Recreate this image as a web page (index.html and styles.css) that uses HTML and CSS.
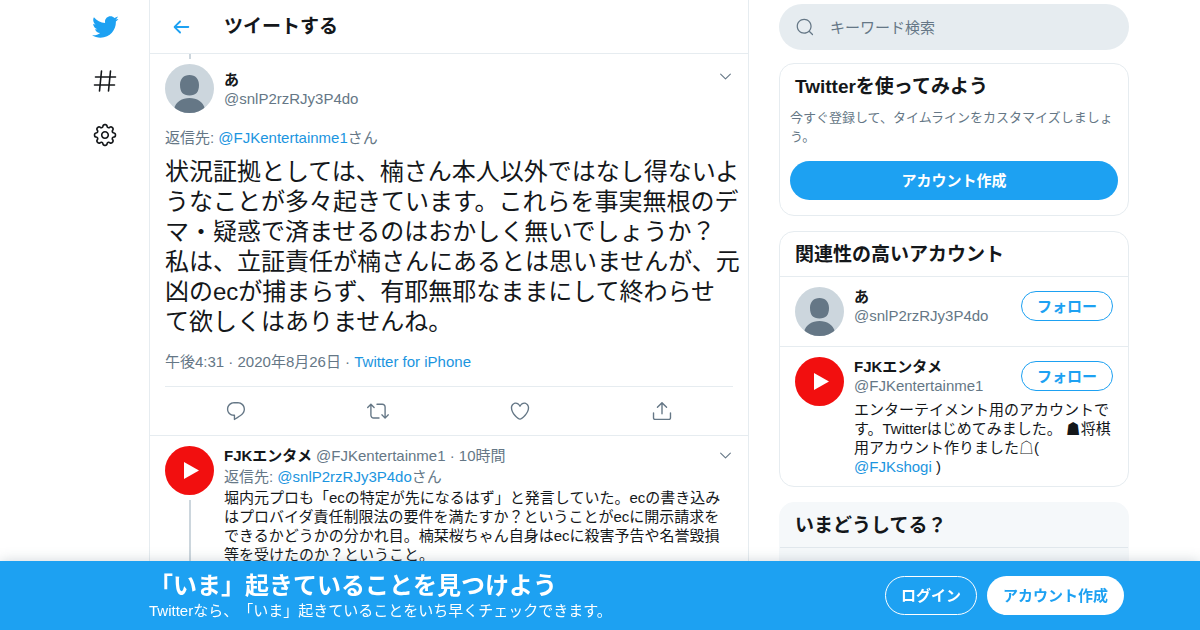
FILE: index.html
```html
<!DOCTYPE html>
<html lang="ja">
<head>
  <meta charset="UTF-8">
  <meta name="viewport" content="width=device-width, initial-scale=1.0">
  <title>ツイートする</title>
  <link rel="stylesheet" href="styles.css">
</head>
<body>
  <!-- shared icons -->
  <svg class="sprite" aria-hidden="true">
    <symbol id="chevron" viewBox="0 0 24 24">
      <path d="M3 7.5l9 9 9-9" fill="none" stroke="currentColor" stroke-width="2" stroke-linecap="round" stroke-linejoin="round"/>
    </symbol>
    <symbol id="person" viewBox="0 0 49 49">
      <rect width="49" height="49" fill="#ccd6dd"/>
      <path d="M24.500 11c6 0 9.500 4 9.500 10 0 7-3 10.500-9.500 10.500S15 28 15 21c0-6 3.500-10 9.500-10zM9 45c2-7.500 8-11 15.500-11S38 37.500 40 45v4H9z" fill="#657786"/>
    </symbol>
    <symbol id="play" viewBox="0 0 49 49">
      <rect width="49" height="49" fill="#f20f0f"/>
      <path d="M19 16v17l15-8.500z" fill="#fff"/>
    </symbol>
  </svg>

  <div class="page">
    <nav class="nav">
      <a href="#" class="nav-link" aria-label="Twitter">
        <svg class="bird" viewBox="0 0 24 24"><path d="M23.643 4.937c-.835.37-1.732.62-2.675.733.962-.576 1.7-1.49 2.048-2.578-.9.534-1.897.922-2.958 1.13-.85-.904-2.06-1.47-3.4-1.47-2.572 0-4.658 2.086-4.658 4.66 0 .364.042.718.12 1.06-3.873-.195-7.304-2.05-9.602-4.868-.4.69-.63 1.49-.63 2.342 0 1.616.823 3.043 2.072 3.878-.764-.025-1.482-.234-2.11-.583v.06c0 2.257 1.605 4.14 3.737 4.568-.392.106-.803.162-1.227.162-.3 0-.593-.028-.877-.082.593 1.85 2.313 3.198 4.352 3.234-1.595 1.25-3.604 1.995-5.786 1.995-.376 0-.747-.022-1.112-.065 2.062 1.323 4.51 2.093 7.14 2.093 8.57 0 13.255-7.098 13.255-13.254 0-.2-.005-.402-.014-.602.91-.658 1.7-1.477 2.323-2.41z"/></svg>
      </a>
      <a href="#" class="nav-link" aria-label="話題を検索">
        <svg viewBox="0 0 26 26"><path d="M9.500 3L7.500 23M18.500 3l-2 20M3.500 9h20M2.500 17h20" fill="none" stroke="currentColor" stroke-width="1.600" stroke-linecap="round"/></svg>
      </a>
      <a href="#" class="nav-link" aria-label="設定">
        <svg viewBox="0 0 24 24"><path d="M12 8.21c-2.09 0-3.79 1.7-3.79 3.79s1.7 3.79 3.79 3.79 3.79-1.7 3.79-3.79-1.7-3.79-3.79-3.79zm0 6.08c-1.262 0-2.29-1.026-2.29-2.29S10.74 9.71 12 9.71s2.29 1.026 2.29 2.29-1.028 2.29-2.29 2.29z"/><path d="M12.36 22.375h-.722c-1.183 0-2.154-.888-2.262-2.064l-.014-.147c-.025-.287-.207-.533-.472-.644-.286-.12-.582-.065-.798.115l-.116.097c-.868.725-2.253.663-3.06-.14l-.51-.51c-.836-.84-.896-2.154-.14-3.06l.098-.118c.186-.222.23-.523.122-.787-.11-.272-.358-.454-.646-.48l-.15-.014c-1.18-.107-2.067-1.08-2.067-2.262v-.722c0-1.183.888-2.154 2.064-2.262l.156-.014c.285-.025.53-.207.642-.473.11-.27.065-.573-.12-.795l-.094-.116c-.757-.908-.698-2.223.137-3.06l.512-.512c.804-.804 2.188-.865 3.06-.14l.116.098c.218.184.528.23.79.122.27-.112.452-.358.477-.643l.014-.153c.107-1.18 1.08-2.066 2.262-2.066h.722c1.183 0 2.154.888 2.262 2.064l.014.156c.025.285.206.53.472.64.277.117.58.062.794-.117l.12-.102c.867-.723 2.254-.662 3.06.14l.51.512c.836.838.896 2.153.14 3.06l-.1.118c-.188.22-.234.522-.123.788.112.27.36.45.646.478l.152.014c1.18.107 2.067 1.08 2.067 2.262v.723c0 1.183-.888 2.154-2.064 2.262l-.155.014c-.284.024-.53.205-.64.47-.113.272-.067.574.117.795l.1.12c.756.905.696 2.22-.14 3.06l-.51.51c-.807.804-2.19.864-3.06.14l-.115-.096c-.217-.183-.53-.23-.79-.122-.273.114-.455.36-.48.646l-.014.15c-.107 1.173-1.08 2.06-2.262 2.06zm-3.773-4.42c.3 0 .593.06.87.175.79.328 1.324 1.054 1.4 1.896l.014.147c.037.4.367.7.77.7h.722c.4 0 .73-.3.768-.7l.014-.148c.076-.842.61-1.567 1.392-1.892.793-.33 1.696-.182 2.333.35l.113.094c.178.148.366.18.493.18.206 0 .4-.08.546-.227l.51-.51c.284-.284.305-.73.048-1.038l-.1-.12c-.542-.65-.677-1.54-.352-2.323.326-.79 1.052-1.32 1.894-1.397l.155-.014c.397-.037.7-.367.7-.77v-.722c0-.4-.303-.73-.702-.768l-.152-.014c-.846-.078-1.57-.61-1.895-1.393-.326-.788-.19-1.678.353-2.327l.1-.118c.257-.31.236-.756-.048-1.04l-.51-.51c-.146-.147-.34-.227-.546-.227-.127 0-.315.032-.492.18l-.12.1c-.634.528-1.55.67-2.322.354-.788-.327-1.32-1.052-1.397-1.896l-.014-.155c-.035-.397-.365-.7-.767-.7h-.723c-.4 0-.73.303-.768.702l-.014.152c-.076.843-.608 1.568-1.39 1.893-.787.326-1.693.183-2.33-.35l-.118-.096c-.18-.15-.368-.18-.495-.18-.206 0-.4.08-.546.226l-.512.51c-.282.284-.303.73-.046 1.038l.1.118c.54.653.677 1.544.352 2.325-.327.788-1.052 1.32-1.895 1.397l-.156.014c-.397.037-.7.367-.7.77v.722c0 .4.303.73.702.768l.15.014c.848.078 1.573.612 1.897 1.396.325.786.19 1.675-.353 2.325l-.096.115c-.26.31-.238.756.046 1.04l.51.51c.146.147.34.227.546.227.127 0 .315-.03.492-.18l.116-.096c.406-.336.923-.524 1.453-.524z"/></svg>
      </a>
    </nav>

    <main class="main">
      <header class="main-header">
        <button class="back" aria-label="戻る">
          <svg viewBox="0 0 24 24"><path d="M20 11H7.414l4.293-4.293c.39-.39.39-1.023 0-1.414s-1.023-.39-1.414 0l-6 6c-.39.39-.39 1.023 0 1.414l6 6c.195.195.45.293.707.293s.512-.098.707-.293c.39-.39.39-1.023 0-1.414L7.414 13H20c.553 0 1-.447 1-1s-.447-1-1-1z"/></svg>
        </button>
        <h1 class="title">ツイートする</h1>
      </header>

      <article class="tweet">
        <div class="thread-top"></div>
        <div class="author">
          <svg class="avatar"><use href="#person"/></svg>
          <div class="author-text">
            <p class="name">あ</p>
            <p class="gray">@snlP2rzRJy3P4do</p>
          </div>
          <button class="more" aria-label="もっと見る"><svg><use href="#chevron"/></svg></button>
        </div>
        <p class="reply-to gray">返信先: <a href="#">@FJKentertainme1</a>さん</p>
        <p class="tweet-text">状況証拠としては、楠さん本人以外ではなし得ないようなことが多々起きています。これらを事実無根のデマ・疑惑で済ませるのはおかしく無いでしょうか？<br>私は、立証責任が楠さんにあるとは思いませんが、元凶のecが捕まらず、有耶無耶なままにして終わらせ<br>て欲しくはありませんね。</p>
        <p class="meta gray">午後4:31 · 2020年8月26日 · <a href="#">Twitter for iPhone</a></p>
        <div class="actions">
          <button aria-label="返信"><svg viewBox="0 0 24 24"><path d="M14.046 2.242l-4.148-.01h-.002c-4.374 0-7.8 3.427-7.8 7.802 0 4.098 3.186 7.206 7.465 7.37v3.828c0 .108.044.286.12.403.142.225.384.347.632.347.138 0 .277-.038.402-.118.264-.168 6.473-4.14 8.088-5.506 1.902-1.61 3.04-3.97 3.043-6.312v-.017c-.006-4.367-3.43-7.787-7.8-7.788zm3.787 12.972c-1.134.96-4.862 3.405-6.772 4.643V16.67c0-.414-.335-.75-.75-.75h-.396c-3.66 0-6.318-2.476-6.318-5.886 0-3.534 2.768-6.302 6.3-6.302l4.147.01h.002c3.532 0 6.3 2.766 6.302 6.296-.003 1.91-.942 3.844-2.514 5.176z"/></svg></button>
          <button aria-label="リツイート"><svg viewBox="0 0 24 24"><path d="M23.77 15.67c-.292-.293-.767-.293-1.06 0l-2.22 2.22V7.65c0-2.068-1.683-3.75-3.75-3.75h-5.85c-.414 0-.75.336-.75.75s.336.75.75.75h5.85c1.24 0 2.25 1.01 2.25 2.25v10.24l-2.22-2.22c-.293-.293-.768-.293-1.06 0s-.294.768 0 1.06l3.5 3.5c.145.147.337.22.53.22s.383-.072.53-.22l3.5-3.5c.294-.292.294-.767 0-1.06zm-10.66 3.28H7.26c-1.24 0-2.25-1.01-2.25-2.25V6.46l2.22 2.22c.148.147.34.22.532.22s.384-.073.53-.22c.293-.293.293-.768 0-1.06l-3.5-3.5c-.293-.294-.768-.294-1.06 0l-3.5 3.5c-.294.292-.294.767 0 1.06s.767.293 1.06 0l2.22-2.22V16.7c0 2.068 1.683 3.75 3.75 3.75h5.85c.414 0 .75-.336.75-.75s-.337-.75-.75-.75z"/></svg></button>
          <button aria-label="いいね"><svg viewBox="0 0 24 24"><path d="M12 21.638h-.014C9.403 21.59 1.95 14.856 1.95 8.478c0-3.064 2.525-5.754 5.403-5.754 2.29 0 3.83 1.58 4.646 2.73.814-1.148 2.354-2.73 4.645-2.73 2.88 0 5.404 2.69 5.404 5.755 0 6.376-7.454 13.11-10.037 13.157H12zM7.354 4.225c-2.08 0-3.903 1.988-3.903 4.255 0 5.74 7.034 11.596 8.55 11.658 1.518-.062 8.55-5.917 8.55-11.658 0-2.267-1.823-4.255-3.903-4.255-2.528 0-3.94 2.936-3.952 2.965-.23.562-1.156.562-1.387 0-.014-.03-1.425-2.965-3.954-2.965z"/></svg></button>
          <button aria-label="共有"><svg viewBox="0 0 24 24"><path d="M17.53 7.47l-5-5c-.293-.293-.768-.293-1.06 0l-5 5c-.294.293-.294.768 0 1.06s.767.294 1.06 0l3.72-3.72V15c0 .414.336.75.75.75s.75-.336.75-.75V4.81l3.72 3.72c.146.147.338.22.53.22s.384-.072.53-.22c.293-.293.293-.767 0-1.06z"/><path d="M19.708 21.944H4.292C3.028 21.944 2 20.916 2 19.652V14c0-.414.336-.75.75-.75s.75.336.75.75v5.652c0 .437.355.792.792.792h15.416c.437 0 .792-.355.792-.792V14c0-.414.336-.75.75-.75s.75.336.75.75v5.652c0 1.264-1.028 2.292-2.292 2.292z"/></svg></button>
        </div>
      </article>

      <article class="reply">
        <div class="reply-side">
          <svg class="avatar"><use href="#play"/></svg>
          <div class="thread-line"></div>
        </div>
        <div class="reply-body">
          <div class="reply-head">
            <p class="gray"><b class="name">FJKエンタメ</b> @FJKentertainme1 · 10時間</p>
            <button class="more" aria-label="もっと見る"><svg><use href="#chevron"/></svg></button>
          </div>
          <p class="gray">返信先: <a href="#">@snlP2rzRJy3P4do</a>さん</p>
          <p class="reply-text">堀内元プロも「ecの特定が先になるはず」と発言していた。ecの書き込みはプロバイダ責任制限法の要件を満たすか？ということがecに開示請求をできるかどうかの分かれ目。楠栞桜ちゃん自身はecに殺害予告や名誉毀損等を受けたのか？ということ。</p>
        </div>
      </article>
    </main>

    <aside class="side">
      <label class="search">
        <svg viewBox="0 0 24 24"><path d="M21.53 20.47l-3.66-3.66C19.195 15.24 20 13.214 20 11c0-4.97-4.03-9-9-9s-9 4.03-9 9 4.03 9 9 9c2.215 0 4.24-.804 5.808-2.13l3.66 3.66c.147.146.34.22.53.22s.385-.073.53-.22c.295-.293.295-.767.002-1.06zM3.5 11c0-4.135 3.365-7.5 7.5-7.5s7.5 3.365 7.5 7.5-3.365 7.5-7.5 7.5-7.5-3.365-7.5-7.5z"/></svg>
        <input type="text" placeholder="キーワード検索" aria-label="キーワード検索">
      </label>

      <section class="card signup">
        <h2 class="title">Twitterを使ってみよう</h2>
        <p class="signup-text gray">今すぐ登録して、タイムラインをカスタマイズしましょう。</p>
        <button class="btn btn-blue">アカウント作成</button>
      </section>

      <section class="card">
        <h2 class="title card-title">関連性の高いアカウント</h2>
        <div class="user">
          <svg class="avatar"><use href="#person"/></svg>
          <div class="user-body">
            <div class="user-head">
              <div>
                <p class="name">あ</p>
                <p class="gray">@snlP2rzRJy3P4do</p>
              </div>
              <button class="btn btn-follow">フォロー</button>
            </div>
          </div>
        </div>
        <div class="user">
          <svg class="avatar"><use href="#play"/></svg>
          <div class="user-body">
            <div class="user-head">
              <div>
                <p class="name">FJKエンタメ</p>
                <p class="gray">@FJKentertainme1</p>
              </div>
              <button class="btn btn-follow">フォロー</button>
            </div>
            <p class="bio">エンターテイメント用のアカウントです。Twitterはじめてみました。 ☗将棋用アカウント作りました☖( <a href="#">@FJKshogi</a> )</p>
          </div>
        </div>
      </section>

      <section class="card trends">
        <h2 class="title card-title">いまどうしてる？</h2>
      </section>
    </aside>
  </div>

  <div class="banner">
    <div class="banner-inner">
      <div class="banner-text">
        <p class="banner-title">「いま」起きていることを見つけよう</p>
        <p>Twitterなら、「いま」起きていることをいち早くチェックできます。</p>
      </div>
      <button class="btn btn-login">ログイン</button>
      <button class="btn btn-white">アカウント作成</button>
    </div>
  </div>
</body>
</html>
```
FILE: styles.css
```css
* {
  margin: 0;
  padding: 0;
  box-sizing: border-box;
}

body {
  height: 100vh;
  overflow: hidden;
  font-family: "Liberation Sans", "Noto Sans CJK JP", sans-serif;
  font-size: 15px;
  line-height: 19px;
  text-spacing-trim: space-all;
  color: #14171a;
  background-color: #fff;
}

a {
  color: #1b95e0;
  text-decoration: none;
}

button {
  border: none;
  background: none;
  font: inherit;
  color: inherit;
  cursor: pointer;
}

svg {
  display: block;
  flex-shrink: 0;
  fill: currentColor;
}

.sprite {
  display: none;
}

.gray {
  color: #657786;
}

.name {
  font-weight: bold;
  color: #14171a;
}

.title {
  font-size: 19px;
  line-height: 25px;
  font-weight: bold;
}

.avatar {
  width: 49px;
  height: 49px;
  border-radius: 50%;
}

.page {
  display: flex;
  justify-content: center;
  height: 100%;
  padding-right: 10px;
}

/* left nav */
.nav {
  display: flex;
  flex-direction: column;
  align-items: center;
  width: 88px;
}

.nav-link {
  display: flex;
  align-items: center;
  height: 54px;
  color: #14171a;
}

.nav-link svg {
  width: 26px;
  height: 26px;
}

.nav-link .bird {
  width: 28px;
  height: 28px;
  color: #1da1f2;
}

/* timeline */
.main {
  display: flex;
  flex-direction: column;
  flex: 0 1 600px;
  border-left: 1px solid #e6ecf0;
  border-right: 1px solid #e6ecf0;
}

.main-header {
  display: flex;
  align-items: center;
  gap: 32px;
  height: 54px;
  padding: 0 20px;
  border-bottom: 1px solid #e6ecf0;
}

.back svg {
  width: 22px;
  height: 22px;
  color: #1da1f2;
}

.tweet {
  padding: 0 15px;
  border-bottom: 1px solid #e6ecf0;
}

.thread-top {
  width: 2px;
  height: 5px;
  margin: 0 24px 5px;
  background-color: #ccd6dd;
}

.author {
  display: flex;
  align-items: center;
  gap: 10px;
}

.author-text {
  flex: 1;
}

.more {
  align-self: flex-start;
  padding: 6px 1px;
  color: #657786;
}

.more svg {
  width: 13px;
  height: 13px;
}

.reply-to {
  margin-top: 15px;
}

.tweet-text {
  margin: 10px -8px 0 0;
  font-size: 24px;
  line-height: 30px;
}

.meta {
  padding: 15px 0;
  border-bottom: 1px solid #e6ecf0;
}

.actions {
  display: flex;
  justify-content: space-around;
  align-items: center;
  height: 48px;
  color: #657786;
}

.actions svg {
  width: 22px;
  height: 22px;
}

.reply {
  display: flex;
  flex: 1;
  gap: 10px;
  padding: 10px 15px 0;
}

.reply-side {
  display: flex;
  flex-direction: column;
  align-items: center;
  gap: 5px;
}

.thread-line {
  flex: 1;
  width: 2px;
  background-color: #ccd6dd;
}

.reply-body {
  display: flex;
  flex: 1;
  flex-direction: column;
  gap: 2px;
}

.reply-head {
  display: flex;
  justify-content: space-between;
  height: 19px;
}

.reply-head .more {
  padding: 3px 1px;
}

.reply-text {
  padding-right: 10px;
}

/* right column */
.side {
  display: flex;
  flex-direction: column;
  gap: 15px;
  flex: 0 0 350px;
  margin-left: 30px;
  padding-top: 4px;
}

.search {
  display: flex;
  align-items: center;
  gap: 15px;
  height: 46px;
  flex-shrink: 0;
  margin-bottom: -2px;
  padding: 0 16px;
  border-radius: 23px;
  background-color: #e6ecf0;
  color: #657786;
}

.search svg {
  width: 20px;
  height: 20px;
}

.search input {
  flex: 1;
  border: none;
  outline: none;
  background: none;
  font: inherit;
}

.search input::placeholder {
  color: #657786;
}

.card {
  border: 1px solid #e6ecf0;
  border-radius: 15px;
}

.signup {
  padding: 10px 10px 15px;
}

.signup .title {
  padding: 0 5px;
}

.signup-text {
  margin: 9px 0 15px;
  font-size: 13px;
}

.card-title {
  padding: 10px 15px 9px;
}

.user {
  display: flex;
  gap: 10px;
  padding: 10px 15px;
  border-top: 1px solid #e6ecf0;
}

.user-body {
  flex: 1;
}

.user-head {
  display: flex;
  justify-content: space-between;
  align-items: center;
}

.bio {
  margin-top: 5px;
}

.trends {
  flex: 1;
  border-color: #f5f8fa;
  background-color: #f5f8fa;
}

.trends .card-title {
  border-bottom: 1px solid #e1e8ed;
}

.btn {
  height: 39px;
  padding: 0 15px;
  border: 1px solid transparent;
  border-radius: 20px;
  font-weight: bold;
  white-space: nowrap;
}

.btn-blue {
  width: 100%;
  background-color: #1da1f2;
  color: #fff;
}

.btn-follow {
  height: 30px;
  border-color: #1da1f2;
  color: #1da1f2;
}

.btn-login {
  border-color: #fff;
  color: #fff;
}

.btn-white {
  background-color: #fff;
  color: #1da1f2;
}

/* login bar over the page */
.banner {
  position: fixed;
  right: 0;
  bottom: 0;
  left: 0;
  display: flex;
  justify-content: center;
  padding: 10px 10px 10px 0;
  background-color: #1da1f2;
  color: #fff;
  box-shadow: 0 0 12px rgba(101, 119, 134, 0.3);
}

.banner-inner {
  display: flex;
  flex: 0 1 1068px;
  align-items: center;
  gap: 10px;
  padding: 0 5px 0 88px;
}

.banner-text {
  flex: 1;
}

.banner-title {
  font-size: 24px;
  line-height: 30px;
  font-weight: bold;
}
```
